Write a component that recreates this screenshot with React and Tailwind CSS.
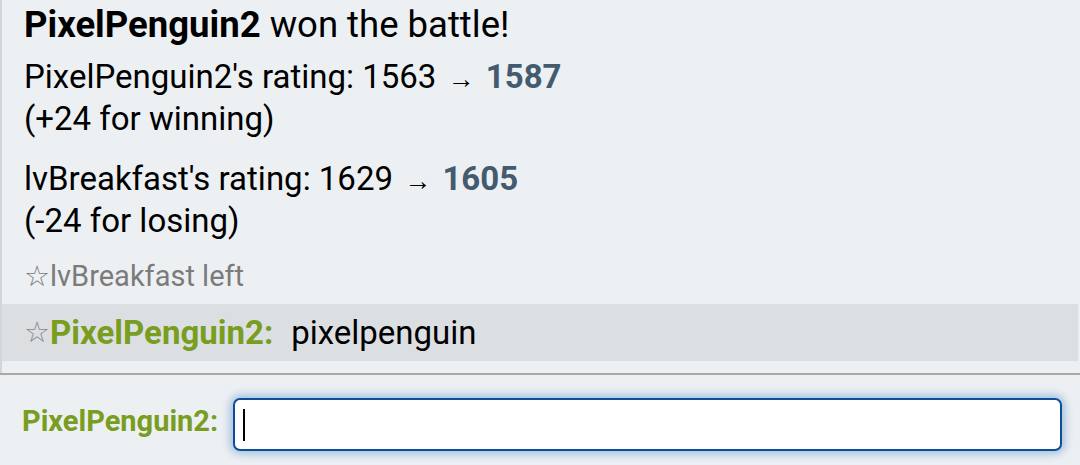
export default function App() {
  return (
    <div className="w-[1080px] h-[465px] bg-[#edf0f3] text-black flex flex-col overflow-hidden" style={{ fontFamily: 'Roboto, "Liberation Sans", sans-serif' }}>
      <div className="h-[373px] border-l-2 border-[#d3d6d9] flex flex-col">
        <div className="pl-[22px] pt-[4px] text-[36.5px] leading-[41px] whitespace-nowrap">
          <strong className="font-bold">PixelPenguin2</strong> won the battle!
        </div>
        <div className="pl-[22px] pt-[12px] text-[33px] leading-[40px] whitespace-nowrap">
          PixelPenguin2's rating: 1563 <span className="text-[27px] mx-[3px]">→</span> <strong className="font-bold text-[#445b6f]">1587</strong>
          <br />
          (+24 for winning)
        </div>
        <div className="pl-[22px] pt-[20px] text-[33px] leading-[40px] whitespace-nowrap">
          lvBreakfast's rating: 1629 <span className="text-[27px] mx-[3px]">→</span> <strong className="font-bold text-[#445b6f]">1605</strong>
          <br />
          (-24 for losing)
        </div>
        <div className="pl-[22px] pt-[17px] text-[29px] leading-[36px] text-[#7b7b7b] whitespace-nowrap">
          ☆lvBreakfast left
        </div>
        <div className="mt-[10px] h-[57px] mr-[2px] bg-[#dcdfe2] pl-[22px] flex items-center text-[33px] whitespace-nowrap">
          <span className="text-[#888] text-[29px]">☆</span>
          <strong className="font-bold text-[#789d1f]">PixelPenguin2:</strong>
          <span className="ml-[18px]">pixelpenguin</span>
        </div>
      </div>
      <div className="border-t-2 border-[#a9a9a9] flex-1 flex items-start pt-[23px] pl-[22px] pr-[18px] gap-[15px]">
        <label className="font-bold text-[#789d1f] text-[29px] leading-[42px] mt-[2px] whitespace-nowrap">PixelPenguin2:</label>
        <div className="flex-1 h-[53px] bg-white border-2 border-[#0d4f97] rounded-[7px] shadow-[0_0_8px_3px_rgba(70,130,200,0.45)] flex items-center pl-[8px]">
          <div className="w-[2px] h-[32px] bg-black" />
        </div>
      </div>
    </div>
  );
}
